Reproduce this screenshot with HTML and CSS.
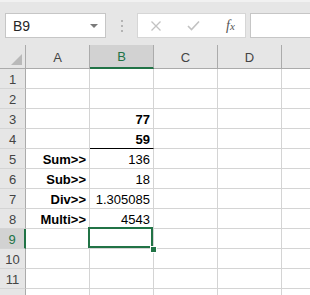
FILE: index.html
```html
<!DOCTYPE html>
<html lang="en">
<head>
    <meta charset="utf-8">
    <title>Sheet</title>
    <link rel="stylesheet" href="styles.css">
</head>
<body>
<div class="toolbar">
    <div class="namebox">
        <span class="ref">B9</span>
        <span class="arrow"></span>
    </div>
    <div class="grip"><i></i><i></i><i></i></div>
    <div class="fxbox">
        <svg class="icon" width="12" height="12" viewBox="0 0 12 12"><path d="M1.5 1.5 L10.5 10.5 M10.5 1.5 L1.5 10.5" stroke="#c2c2c2" stroke-width="1.3" fill="none"/></svg>
        <svg class="icon" width="13" height="11" viewBox="0 0 13 11"><path d="M1 6 L4.5 9.5 L12 1.5" stroke="#c2c2c2" stroke-width="1.6" fill="none"/></svg>
        <span class="fx">f<small>x</small></span>
    </div>
    <div class="formula"></div>
</div>
<div class="sheet">
    <div class="corner"><span></span></div>
    <div class="colhead">A</div>
    <div class="colhead active">B</div>
    <div class="colhead">C</div>
    <div class="colhead">D</div>
    <div class="colhead"></div>

    <div class="rowhead">1</div><div class="cell"></div><div class="cell"></div><div class="cell"></div><div class="cell"></div><div class="cell"></div>
    <div class="rowhead">2</div><div class="cell"></div><div class="cell"></div><div class="cell"></div><div class="cell"></div><div class="cell"></div>
    <div class="rowhead">3</div><div class="cell"></div><div class="cell bold">77</div><div class="cell"></div><div class="cell"></div><div class="cell"></div>
    <div class="rowhead">4</div><div class="cell"></div><div class="cell bold underline">59</div><div class="cell"></div><div class="cell"></div><div class="cell"></div>
    <div class="rowhead">5</div><div class="cell bold">Sum&gt;&gt;</div><div class="cell">136</div><div class="cell"></div><div class="cell"></div><div class="cell"></div>
    <div class="rowhead">6</div><div class="cell bold">Sub&gt;&gt;</div><div class="cell">18</div><div class="cell"></div><div class="cell"></div><div class="cell"></div>
    <div class="rowhead">7</div><div class="cell bold">Div&gt;&gt;</div><div class="cell">1.305085</div><div class="cell"></div><div class="cell"></div><div class="cell"></div>
    <div class="rowhead">8</div><div class="cell bold">Multi&gt;&gt;</div><div class="cell">4543</div><div class="cell"></div><div class="cell"></div><div class="cell"></div>
    <div class="rowhead active">9</div><div class="cell"></div><div class="cell selected"></div><div class="cell"></div><div class="cell"></div><div class="cell"></div>
    <div class="rowhead">10</div><div class="cell"></div><div class="cell"></div><div class="cell"></div><div class="cell"></div><div class="cell"></div>
    <div class="rowhead">11</div><div class="cell"></div><div class="cell"></div><div class="cell"></div><div class="cell"></div><div class="cell"></div>
    <div class="rowhead"></div><div class="cell"></div><div class="cell"></div><div class="cell"></div><div class="cell"></div><div class="cell"></div>
</div>
</body>
</html>
```

FILE: styles.css
```css
html, body{
    margin: 0;
    padding: 0;
    width: 310px;
    height: 295px;
    overflow: hidden;
    background: #fff;
    font-family: "Liberation Sans", Arial, sans-serif;
}
.toolbar{
    height: 45px;
    box-sizing: border-box;
    padding: 13px 0 0 5px;
    background: #e6e6e6;
    border-top: 2px solid #f1f1f1;
    display: flex;
    align-items: flex-start;
}
.namebox{
    width: 101px;
    height: 25px;
    box-sizing: border-box;
    border: 1px solid #c6c6c6;
    background: #fff;
    display: flex;
    align-items: center;
    justify-content: space-between;
    padding: 0 7px 0 7px;
    margin-top: -2px;
}
.ref{
    font-size: 14px;
    color: #262626;
}
.arrow{
    width: 0;
    height: 0;
    border-left: 4px solid transparent;
    border-right: 4px solid transparent;
    border-top: 4px solid #7a7a7a;
}
.grip{
    width: 2px;
    margin: 5px 14px 0 15px;
    display: flex;
    flex-direction: column;
    gap: 3px;
}
.grip i{
    display: block;
    width: 2px;
    height: 2px;
    background: #b4b4b4;
}
.fxbox{
    width: 109px;
    height: 25px;
    box-sizing: border-box;
    margin-top: -2px;
    border: 1px solid #d6d6d6;
    background: #fff;
    display: flex;
    align-items: center;
    padding: 0 0 0 12px;
    gap: 25px;
}
.fx{
    font-family: "Liberation Serif", serif;
    font-style: italic;
    font-size: 14px;
    color: #555;
    margin-left: 1px;
}
.fx small{
    font-size: 11px;
}
.formula{
    flex: 1;
    height: 25px;
    box-sizing: border-box;
    margin: -2px 0 0 4px;
    border: 1px solid #c6c6c6;
    border-right: none;
    background: #fff;
}
.sheet{
    display: grid;
    grid-template-columns: 26px repeat(5, 64px);
    grid-template-rows: 24px repeat(12, 20px);
}
.corner, .colhead, .rowhead, .cell{
    box-sizing: border-box;
}
.corner{
    background: #e6e6e6;
    border-right: 1px solid #ababab;
    border-bottom: 1px solid #ababab;
    display: flex;
    align-items: flex-end;
    justify-content: flex-end;
    padding: 0 3px 3px 0;
}
.corner span{
    width: 0;
    height: 0;
    border-left: 11px solid transparent;
    border-bottom: 11px solid #b9b9b9;
}
.colhead{
    background: #e6e6e6;
    border-right: 1px solid #ababab;
    border-bottom: 1px solid #ababab;
    color: #444;
    font-size: 13px;
    text-align: center;
    line-height: 24px;
    padding-top: 1px;
}
.colhead.active{
    background: #d2d2d2;
    color: #217346;
    border-bottom: 2px solid #217346;
    line-height: 22px;
}
.rowhead{
    background: #e6e6e6;
    border-right: 1px solid #ababab;
    border-bottom: 1px solid #d4d4d4;
    color: #444;
    font-size: 13px;
    text-align: center;
    line-height: 21px;
}
.rowhead.active{
    background: #d2d2d2;
    color: #217346;
    border-right: 2px solid #217346;
}
.cell{
    border-right: 1px solid #d4d4d4;
    border-bottom: 1px solid #d4d4d4;
    font-size: 13px;
    color: #000;
    text-align: right;
    padding-right: 3px;
    line-height: 21px;
    position: relative;
}
.cell.bold{
    font-weight: bold;
}
.cell.underline{
    border-bottom-color: #000;
}
.cell.selected::after{
    content: "";
    position: absolute;
    top: -2px;
    left: -2px;
    right: 0;
    bottom: 0;
    border: 2px solid #217346;
}
.cell.selected::before{
    content: "";
    position: absolute;
    right: -4px;
    bottom: -5px;
    width: 5px;
    height: 5px;
    background: #217346;
    border: 1px solid #fff;
    z-index: 2;
}
```
